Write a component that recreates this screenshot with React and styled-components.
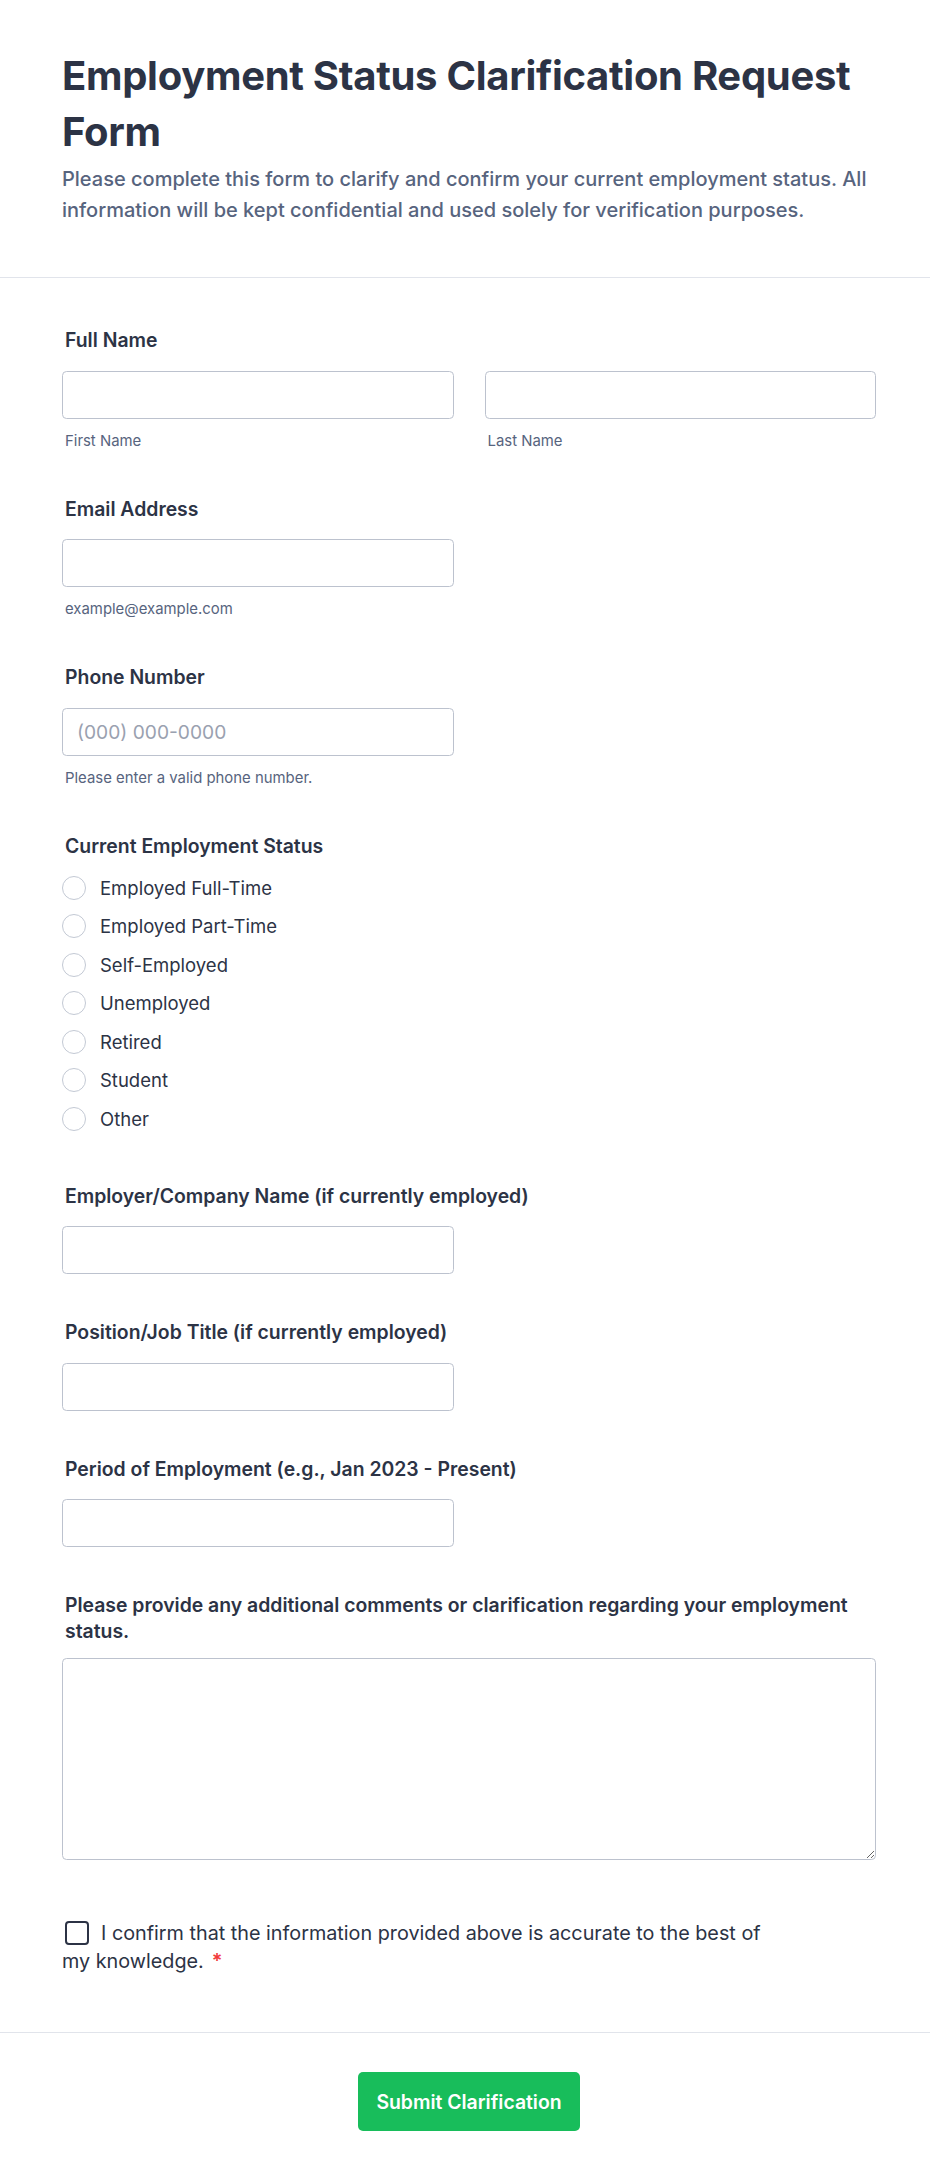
import React from 'react'
import styled, { createGlobalStyle } from 'styled-components'

const GlobalStyle = createGlobalStyle`
	* {
		box-sizing: border-box;
	}
	body {
		margin: 0;
		background: #ffffff;
		font-family: Inter, 'Noto Sans', 'Liberation Sans', sans-serif;
		color: #2c3345;
	}
`

const Page = styled.div`
	width: 100%;
	background: #ffffff;
`

const Header = styled.header`
	padding: 48px 54px 52px 62px;
	border-bottom: 1px solid #e1e4eb;
`

const Title = styled.h1`
	margin: 0;
	font-size: 40px;
	line-height: 56px;
	font-weight: 700;
	letter-spacing: -0.3px;
	color: #2c3345;
`

const Subtitle = styled.p`
	margin: 4px 0 0;
	font-size: 20px;
	line-height: 30.7px;
	font-weight: 500;
	color: #57647e;
`

const FormBody = styled.form`
	padding: 50px 54px 56px 62px;
	display: flex;
	flex-direction: column;
	gap: 46px;
`

const Field = styled.div`
	display: flex;
	flex-direction: column;
	margin-top: ${props => (props.extra ? props.extra : '0')};
`

const Label = styled.label`
	padding-left: 3px;
	font-size: 19.4px;
	line-height: 25.5px;
	font-weight: 600;
	color: #2c3345;
	margin-bottom: ${props => props.space || '17px'};
`

const Row = styled.div`
	display: grid;
	grid-template-columns: 1fr 1fr;
	column-gap: 31px;
`

const Col = styled.div`
	display: flex;
	flex-direction: column;
`

const Input = styled.input`
	width: 100%;
	height: 48px;
	padding: 0 14px;
	border: 1px solid #bcc2ce;
	border-radius: 4.5px;
	background: #ffffff;
	font-family: inherit;
	font-size: 19.2px;
	color: #2c3345;
	outline: none;
	&::placeholder {
		color: #9aa1b0;
	}
`

const Sublabel = styled.span`
	margin-top: 12px;
	padding-left: 3px;
	font-size: 14.9px;
	line-height: 20px;
	color: #57647e;
`

const RadioList = styled.div`
	display: flex;
	flex-direction: column;
`

const RadioRow = styled.label`
	height: 38.5px;
	display: flex;
	align-items: center;
	gap: 14px;
	font-size: 18.5px;
	color: #2c3345;
	cursor: pointer;
`

const RadioCircle = styled.input`
	appearance: none;
	margin: 0;
	width: 24px;
	height: 24px;
	border: 1px solid #c3c9d4;
	border-radius: 50%;
	background: #ffffff;
	flex-shrink: 0;
`

const TextArea = styled.textarea`
	width: 100%;
	height: 202px;
	padding: 12px 14px;
	border: 1px solid #bcc2ce;
	border-radius: 4.5px;
	font-family: inherit;
	font-size: 19.2px;
	color: #2c3345;
	outline: none;
	resize: vertical;
`

const ConsentText = styled.label`
	max-width: 720px;
	font-size: 19.8px;
	line-height: 27.8px;
	color: #2c3345;
`

const CheckBox = styled.input`
	appearance: none;
	margin: 0 12px 0 3px;
	width: 24px;
	height: 24px;
	border: 2px solid #2c3345;
	border-radius: 4px;
	background: #ffffff;
	vertical-align: -5px;
`

const Required = styled.span`
	color: #f23a3c;
	margin-left: 8px;
	font-weight: 600;
`

const Footer = styled.div`
	border-top: 1px solid #e1e4eb;
	padding: 39px 0 49px 8px;
	display: flex;
	justify-content: center;
`

const SubmitButton = styled.button`
	height: 59px;
	padding: 0 18px;
	border: none;
	border-radius: 5px;
	background: #18bd5b;
	color: #ffffff;
	font-family: inherit;
	font-size: 19.4px;
	font-weight: 600;
	cursor: pointer;
`

const statuses = [
	'Employed Full-Time',
	'Employed Part-Time',
	'Self-Employed',
	'Unemployed',
	'Retired',
	'Student',
	'Other',
]

function HalfField({ label, placeholder, hint }) {
	return (
		<Field>
			<Label>{label}</Label>
			<Row>
				<Col>
					<Input placeholder={placeholder} />
					{hint ? <Sublabel>{hint}</Sublabel> : ''}
				</Col>
			</Row>
		</Field>
	)
}

export default function App() {
	return (
		<Page>
			<GlobalStyle />
			<Header>
				<Title>Employment Status Clarification Request Form</Title>
				<Subtitle>
					Please complete this form to clarify and confirm your current employment status. All
					information will be kept confidential and used solely for verification purposes.
				</Subtitle>
			</Header>
			<FormBody onSubmit={e => e.preventDefault()}>
				<Field>
					<Label>Full Name</Label>
					<Row>
						<Col>
							<Input />
							<Sublabel>First Name</Sublabel>
						</Col>
						<Col>
							<Input />
							<Sublabel>Last Name</Sublabel>
						</Col>
					</Row>
				</Field>
				<HalfField label='Email Address' hint='example@example.com' />
				<HalfField
					label='Phone Number'
					placeholder='(000) 000-0000'
					hint='Please enter a valid phone number.'
				/>
				<Field>
					<Label space='9px'>Current Employment Status</Label>
					<RadioList>
						{statuses.map(s => (
							<RadioRow key={s}>
								<RadioCircle type='radio' name='status' />
								{s}
							</RadioRow>
						))}
					</RadioList>
				</Field>
				<HalfField label='Employer/Company Name (if currently employed)' />
				<HalfField label='Position/Job Title (if currently employed)' />
				<HalfField label='Period of Employment (e.g., Jan 2023 - Present)' />
				<Field>
					<Label space='14px'>
						Please provide any additional comments or clarification regarding your employment status.
					</Label>
					<TextArea />
				</Field>
				<Field extra='14px'>
					<ConsentText>
						<CheckBox type='checkbox' />
						I confirm that the information provided above is accurate to the best of my knowledge.
						<Required>*</Required>
					</ConsentText>
				</Field>
			</FormBody>
			<Footer>
				<SubmitButton type='button'>Submit Clarification</SubmitButton>
			</Footer>
		</Page>
	)
}
